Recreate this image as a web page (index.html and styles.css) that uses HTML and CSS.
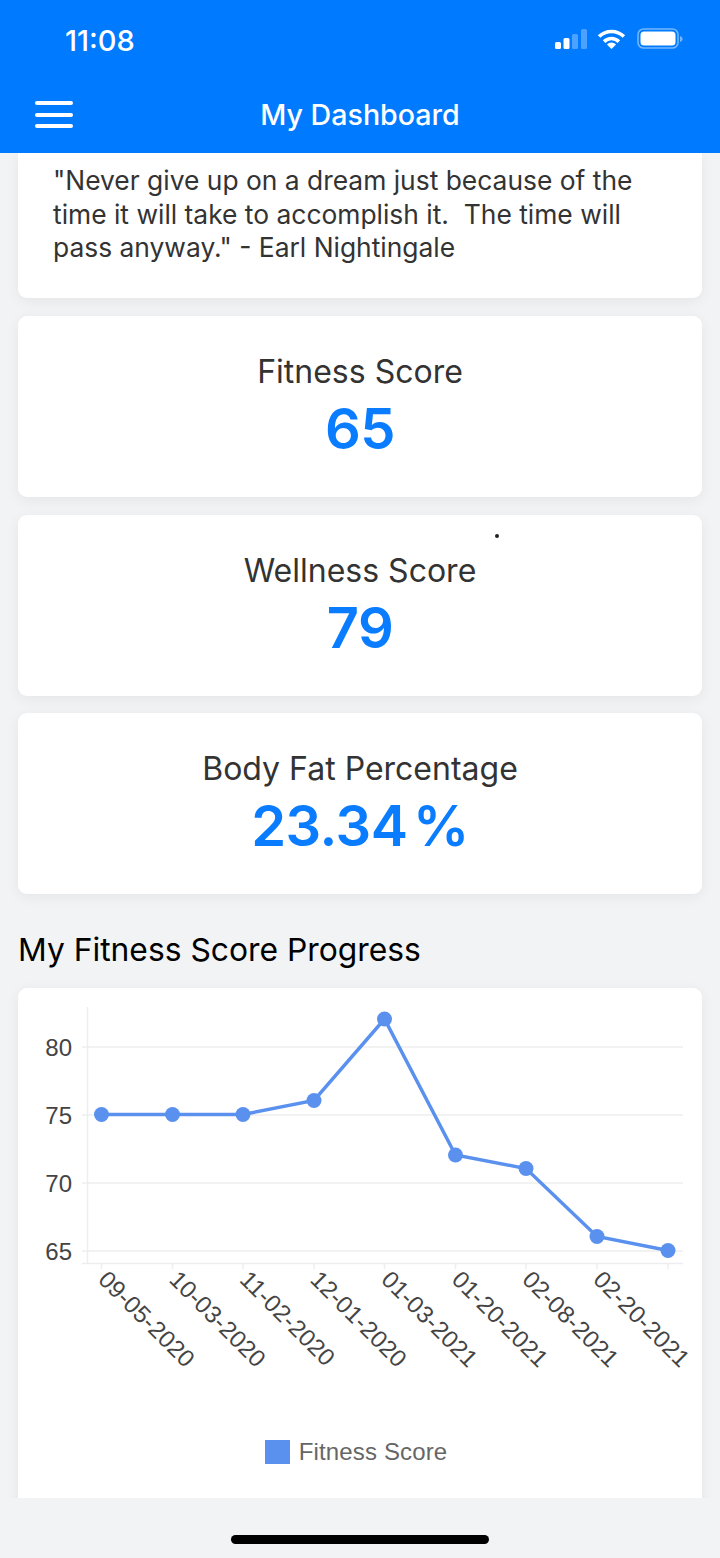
FILE: index.html
```html
<!DOCTYPE html>
<html lang="en">
<head>
    <meta charset="UTF-8">
    <title>My Dashboard</title>
    <link rel="stylesheet" href="styles.css">
</head>
<body>
    <header class="topbar">
        <div class="status">
            <span class="time">11:08</span>
            <svg class="status-icons" width="130" height="22" viewBox="0 0 130 22">
                <!-- signal -->
                <rect x="1" y="14" width="6" height="7" rx="1.5" fill="#fff"/>
                <rect x="9.5" y="10" width="6" height="11" rx="1.5" fill="#fff"/>
                <rect x="18" y="6" width="6" height="15" rx="1.5" fill="#fff" opacity=".3"/>
                <rect x="27" y="1" width="6" height="20" rx="1.5" fill="#fff" opacity=".3"/>
                <!-- wifi -->
                <path d="M45.1 8.6A17.5 17.5 0 0 1 69.9 8.6M50.1 13.6A10.5 10.5 0 0 1 64.9 13.6" fill="none" stroke="#fff" stroke-width="3.6"/>
                <path d="M57.5 21L52.9 16.4A6.5 6.5 0 0 1 62.1 16.4Z" fill="#fff"/>
                <!-- battery -->
                <rect x="84" y="1" width="40" height="19" rx="5.5" fill="none" stroke="#fff" stroke-opacity=".45" stroke-width="1.6"/>
                <rect x="86.5" y="3.5" width="35" height="14" rx="3.5" fill="#fff"/>
                <path d="M126 8v6c1.6-.5 2.600-1.700 2.600-3s-1-2.500-2.600-3z" fill="#fff" opacity=".45"/>
            </svg>
        </div>
        <nav class="navbar">
            <div class="menu">
                <span></span>
                <span></span>
                <span></span>
            </div>
            <h1>My Dashboard</h1>
        </nav>
    </header>

    <main class="content">
        <section class="card quote">
            <p>"Never give up on a dream just because of the time it will take to accomplish it.&nbsp; The time will pass anyway." - Earl Nightingale</p>
        </section>
        <section class="card score">
            <h2>Fitness Score</h2>
            <div class="value">65</div>
        </section>
        <section class="card score">
            <i class="speck"></i>
            <h2>Wellness Score</h2>
            <div class="value">79</div>
        </section>
        <section class="card score">
            <h2>Body Fat Percentage</h2>
            <div class="value">23.34 %</div>
        </section>

        <h3 class="chart-title">My Fitness Score Progress</h3>
        <section class="card chart">
            <svg class="plot" width="684" height="430" viewBox="18 988 684 430">
                <g class="grid">
                    <path d="M82 1047H683M82 1115H683M82 1183H683M82 1251H683"/>
                    <path d="M87.500 1007V1263M82 1263.500H683"/>
                    <path d="M101.500 1264v5M172.500 1264v5M243 1264v5M314 1264v5M384.500 1264v5M455.500 1264v5M526 1264v5M597 1264v5M668 1264v5"/>
                </g>
                <g class="y-labels">
                    <text x="72" y="1056">80</text>
                    <text x="72" y="1124">75</text>
                    <text x="72" y="1192">70</text>
                    <text x="72" y="1260">65</text>
                </g>
                <g class="x-labels">
                    <text transform="translate(97 1281) rotate(45)">09-05-2020</text>
                    <text transform="translate(168 1281) rotate(45)">10-03-2020</text>
                    <text transform="translate(238.500 1281) rotate(45)">11-02-2020</text>
                    <text transform="translate(309 1281) rotate(45)">12-01-2020</text>
                    <text transform="translate(380 1281) rotate(45)">01-03-2021</text>
                    <text transform="translate(450.500 1281) rotate(45)">01-20-2021</text>
                    <text transform="translate(521 1281) rotate(45)">02-08-2021</text>
                    <text transform="translate(592 1281) rotate(45)">02-20-2021</text>
                </g>
                <polyline class="line" points="101.500,1114.500 172.500,1114.500 243,1114.500 314,1100.500 384.500,1019 455.500,1155 526,1168.500 597,1236.500 668,1250.500"/>
                <g class="dots">
                    <circle cx="101.500" cy="1114.500" r="7.500"/>
                    <circle cx="172.500" cy="1114.500" r="7.500"/>
                    <circle cx="243" cy="1114.500" r="7.500"/>
                    <circle cx="314" cy="1100.500" r="7.500"/>
                    <circle cx="384.500" cy="1019" r="7.500"/>
                    <circle cx="455.500" cy="1155" r="7.500"/>
                    <circle cx="526" cy="1168.500" r="7.500"/>
                    <circle cx="597" cy="1236.500" r="7.500"/>
                    <circle cx="668" cy="1250.500" r="7.500"/>
                </g>
            </svg>
            <div class="legend">
                <span class="swatch"></span>
                <span class="legend-label">Fitness Score</span>
            </div>
        </section>
    </main>

    <footer class="homebar">
        <span class="indicator"></span>
    </footer>
</body>
</html>
```

FILE: styles.css
```css
* {
    box-sizing: border-box;
}

body {
    font-family: Inter, "Noto Sans", sans-serif;
    margin: 0;
    width: 720px;
    height: 1558px;
    display: flex;
    flex-direction: column;
    overflow: hidden;
    background-color: #f2f3f5;
}

.topbar {
    background-color: #007aff;
    color: #fff;
    height: 153px;
    flex-shrink: 0;
    position: relative;
    z-index: 1;
}

.status {
    height: 80px;
    display: flex;
    align-items: center;
    justify-content: space-between;
    padding: 0 36px 0 65px;
}

.time {
    font-size: 29px;
    font-weight: 500;
}

.status-icons {
    display: block;
    margin-top: -2px;
}

.navbar {
    height: 73px;
    padding-bottom: 4px;
    display: flex;
    align-items: center;
    justify-content: center;
    position: relative;
}

.navbar h1 {
    font-size: 28.600px;
    font-weight: 500;
    margin: 0;
}

.menu {
    position: absolute;
    left: 35px;
    top: 21px;
    display: flex;
    flex-direction: column;
    gap: 7.500px;
}

.menu span {
    display: block;
    width: 38px;
    height: 4px;
    border-radius: 2px;
    background-color: #fff;
}

.content {
    flex: 1;
    min-height: 0;
    overflow: hidden;
    padding: 0 18px;
    display: flex;
    flex-direction: column;
    gap: 17.750px;
}

.card {
    background-color: #fff;
    border-radius: 9px;
    box-shadow: 0 3px 14px rgba(0, 0, 0, 0.06);
    flex-shrink: 0;
}

.quote {
    height: 145px;
    border-radius: 0 0 9px 9px;
    padding: 11px 35px 0;
}

.quote p {
    margin: 0;
    font-size: 26.400px;
    line-height: 33.500px;
    color: #333;
}

.score {
    height: 181px;
    padding-top: 33px;
    text-align: center;
    position: relative;
}

.score h2 {
    margin: 0;
    font-size: 32px;
    line-height: 46px;
    font-weight: 400;
    color: #333;
}

.value {
    margin-top: 1px;
    font-size: 56px;
    line-height: 66px;
    font-weight: 600;
    letter-spacing: -0.500px;
    word-spacing: -8px;
    color: #0a7cff;
}

.speck {
    position: absolute;
    left: 477px;
    top: 19px;
    width: 4px;
    height: 4px;
    border-radius: 50%;
    background-color: #222;
}

.chart-title {
    margin: 18.250px 0 0;
    font-size: 31.800px;
    line-height: 40px;
    font-weight: 400;
    color: #000;
}

.chart {
    height: 540px;
    border-radius: 9px 9px 0 0;
    font-family: "Liberation Sans", Arial, sans-serif;
}

.plot {
    display: block;
}

.plot text {
    font-size: 24px;
    fill: #444;
}

.x-labels text {
    letter-spacing: 0.150px;
}

.grid path {
    fill: none;
    stroke: #eeeef0;
    stroke-width: 1.500;
}

.y-labels text {
    text-anchor: end;
}

.line {
    fill: none;
    stroke: #5b91ee;
    stroke-width: 3.500;
}

.dots circle {
    fill: #5b91ee;
}

.legend {
    display: flex;
    align-items: center;
    justify-content: center;
    gap: 9px;
    margin-top: 22px;
    padding-right: 8px;
    font-size: 24px;
    line-height: 24px;
    color: #666;
}

.legend-label {
    letter-spacing: 0.150px;
}

.swatch {
    width: 25px;
    height: 24px;
    background-color: #5b91ee;
}

.homebar {
    height: 60px;
    flex-shrink: 0;
    display: flex;
    justify-content: center;
    padding-top: 37px;
    background-color: #f2f3f5;
}

.indicator {
    width: 258px;
    height: 9px;
    border-radius: 5px;
    background-color: #000;
}
```
